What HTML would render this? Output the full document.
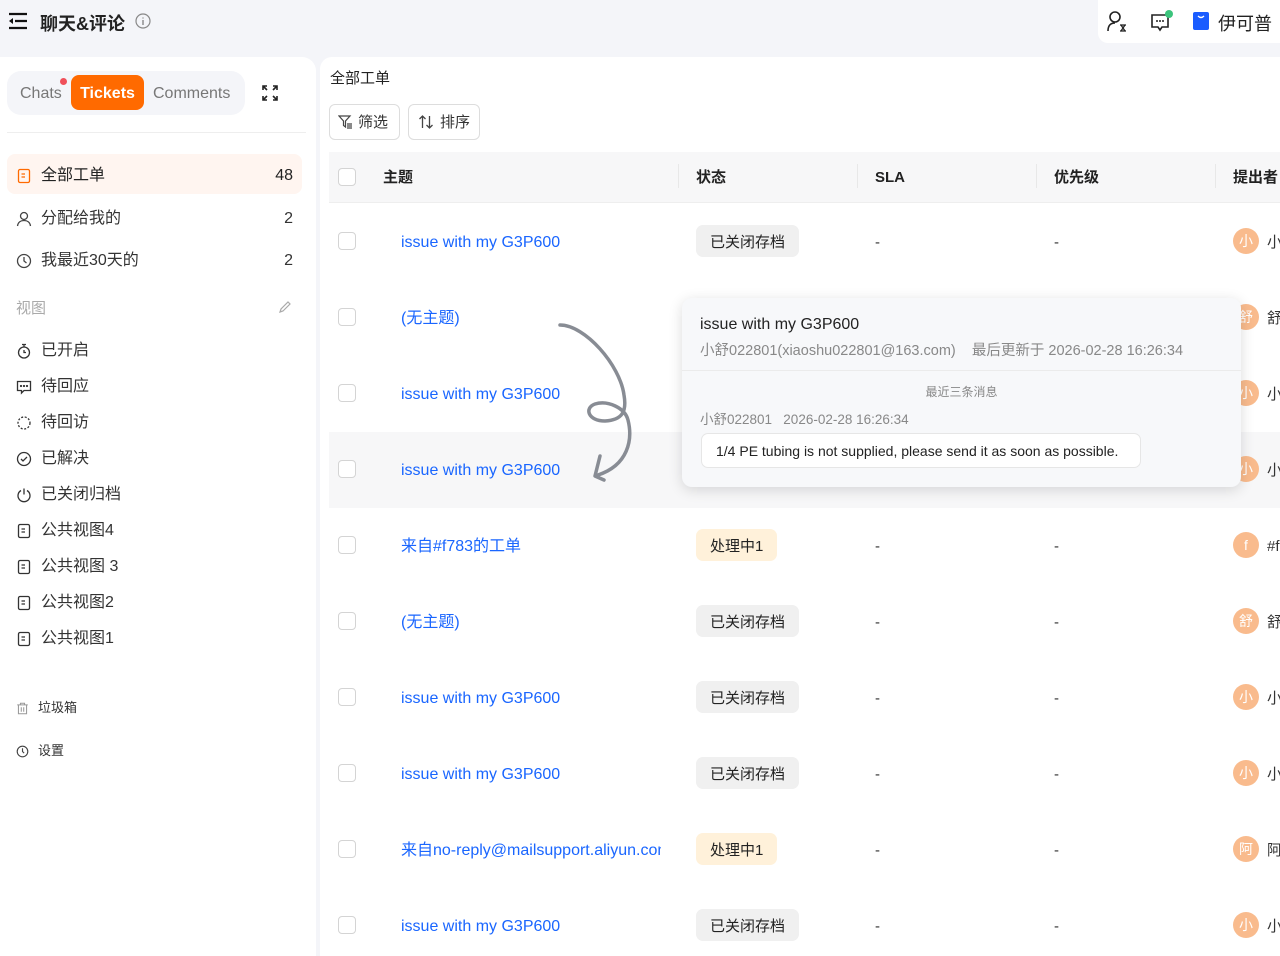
<!DOCTYPE html>
<html><head><meta charset="utf-8"><style>
*{box-sizing:border-box;margin:0;padding:0}
body{width:1280px;height:956px;overflow:hidden;background:#f4f5f9;font-family:"Liberation Sans","Noto Sans CJK SC",sans-serif;color:#1f1f1f;position:relative}
.abs{position:absolute}
.side{position:absolute;left:0;top:57px;width:316px;height:899px;background:#fff;border-radius:0 14px 0 0}
.main{position:absolute;left:320px;top:57px;width:960px;height:899px;background:#fff;border-radius:12px 0 0 0}
.nav{position:absolute;left:16px;font-size:16px;line-height:20px;color:#333;display:flex;align-items:center;gap:9px;margin-top:2px}
.nav svg{width:16px;height:16px}
.cnt{position:absolute;left:243px;width:50px;text-align:right;font-size:16px;line-height:20px;color:#333;margin-top:2px}
.cb{position:absolute;left:338px;width:18px;height:18px;border:1px solid #d4d4d4;border-radius:4px;background:#fff}
.subj{position:absolute;left:401px;font-size:16px;line-height:20px;color:#1a66ff;margin-top:2px}
.tag{position:absolute;left:696px;height:32px;line-height:35px;padding:0 14px;border-radius:7px;font-size:15px;color:#222;background:#f0f0f0}
.tag.o{background:#fff1da}
.dash{position:absolute;font-size:15px;line-height:20px;color:#333;margin-top:2px}
.av{position:absolute;left:1233px;width:26px;height:26px;border-radius:50%;background:#f9bb8d;color:#fff;font-size:14px;text-align:center;line-height:27px}
.nm{position:absolute;left:1267px;font-size:15px;line-height:20px;color:#333;margin-top:2px}
.th{position:absolute;top:168px;font-size:15px;line-height:20px;font-weight:bold;color:#222}
.sep{position:absolute;top:164px;width:1px;height:24px;background:#e8e8e8}
</style></head><body>
<svg class="abs" style="left:8px;top:12px" width="20" height="18" viewBox="0 0 20 18"><path d="M1 2H19M7 9H19M1 16H19" stroke="#111" stroke-width="2.2"/><path d="M1 9L5 6V12Z" fill="#111"/></svg>
<div class="abs" style="left:40px;top:10px;font-size:18px;font-weight:bold;color:#222">聊天&amp;评论</div>
<svg class="abs" style="left:135px;top:13px" width="16" height="16" viewBox="0 0 16 16"><circle cx="8" cy="8" r="7" fill="none" stroke="#888" stroke-width="1.2"/><path d="M8 7V12M8 4.5V5.5" stroke="#888" stroke-width="1.4"/></svg>
<div class="abs" style="left:1098px;top:0;width:190px;height:43px;background:#fff;border-radius:0 0 0 10px"></div>
<svg class="abs" style="left:1106px;top:10px" width="22" height="22" viewBox="0 0 22 22"><circle cx="9" cy="7" r="5" fill="none" stroke="#222" stroke-width="1.6"/><path d="M2 21C2 15 5 13 9 13" fill="none" stroke="#222" stroke-width="1.6"/><path d="M14 15H20M14 21H20M15 15L19 21M19 15L15 21" stroke="#222" stroke-width="1.3"/></svg>
<svg class="abs" style="left:1150px;top:10px" width="26" height="24" viewBox="0 0 26 24"><path d="M2 5H18V17H12L10 20L8 17H2Z" fill="none" stroke="#222" stroke-width="1.6"/><circle cx="7" cy="11" r="1" fill="#222"/><circle cx="10" cy="11" r="1" fill="#222"/><circle cx="13" cy="11" r="1" fill="#222"/><circle cx="19" cy="4" r="4" fill="#3cc47c"/></svg>
<svg class="abs" style="left:1192px;top:11px" width="18" height="20" viewBox="0 0 18 20"><rect x="1" y="1" width="16" height="18" rx="2" fill="#1a5cff"/><path d="M6 5Q9 8 12 5" stroke="#fff" stroke-width="1.3" fill="none"/></svg>
<div class="abs" style="left:1218px;top:10px;font-size:18px;color:#222">伊可普</div>

<div class="side"></div>
<div class="main"></div>
<div class="abs" style="left:7px;top:71px;width:238px;height:44px;background:#f4f5f9;border-radius:14px"></div>
<div class="abs" style="left:20px;top:84px;font-size:16px;line-height:20px;color:#777">Chats</div>
<div class="abs" style="left:60px;top:78px;width:7px;height:7px;border-radius:50%;background:#f0505a"></div>
<div class="abs" style="left:71px;top:75px;width:73px;height:35px;background:#ff6a00;border-radius:8px;color:#fff;font-size:16px;font-weight:bold;text-align:center;line-height:37px">Tickets</div>
<div class="abs" style="left:153px;top:84px;font-size:16px;line-height:20px;color:#777">Comments</div>
<svg class="abs" style="left:262px;top:85px" width="16" height="16" viewBox="0 0 16 16" fill="none" stroke="#222" stroke-width="1.6"><path d="M1 5V1H5M1 1L5 5M11 1H15V5M15 1L11 5M1 11V15H5M1 15L5 11M15 11V15H11M15 15L11 11"/></svg>
<div class="abs" style="left:7px;top:132px;width:299px;height:1px;background:#eee"></div>
<div class="abs" style="left:7px;top:154px;width:295px;height:40px;background:#fff5f0;border-radius:8px"></div>
<div class="nav" style="top:164px;color:#222"><svg viewBox="0 0 16 16" fill="none" stroke="#ff6a00" stroke-width="1.3"><rect x="2.5" y="1.5" width="11" height="13" rx="1.5"/><path d="M5.5 6H9M5.5 9H9"/></svg>全部工单</div><div class="cnt" style="top:164px;color:#222">48</div>
<div class="nav" style="top:207px"><svg viewBox="0 0 16 16" fill="none" stroke="#444" stroke-width="1.3"><circle cx="8" cy="5" r="3.5"/><path d="M1.5 15C2 11 5 9.5 8 9.5S14 11 14.5 15"/></svg>分配给我的</div><div class="cnt" style="top:207px">2</div>
<div class="nav" style="top:249px"><svg viewBox="0 0 16 16" fill="none" stroke="#444" stroke-width="1.3"><circle cx="8" cy="8" r="6.5"/><path d="M8 4V8L10.5 10"/></svg>我最近30天的</div><div class="cnt" style="top:249px">2</div>
<div class="abs" style="left:16px;top:299px;font-size:15px;line-height:20px;color:#aaa">视图</div>
<svg class="abs" style="left:278px;top:300px" width="14" height="14" viewBox="0 0 14 14" fill="none" stroke="#aaa" stroke-width="1.2"><path d="M2 12L3 9L10 2L12 4L5 11Z"/></svg>
<div class="nav" style="top:339px"><svg viewBox="0 0 16 16" fill="none" stroke="#333" stroke-width="1.3"><circle cx="8" cy="9.5" r="5.5"/><path d="M6 1.5H10M8 1.5V4M8 7V9.5H10"/></svg>已开启</div>
<div class="nav" style="top:375px"><svg viewBox="0 0 16 16" fill="none" stroke="#333" stroke-width="1.3"><path d="M1.5 2.5H14.5V11.5H8L5.5 14V11.5H1.5Z"/><circle cx="5" cy="7" r=".5"/><circle cx="8" cy="7" r=".5"/><circle cx="11" cy="7" r=".5"/></svg>待回应</div>
<div class="nav" style="top:411px"><svg viewBox="0 0 16 16" fill="none" stroke="#333" stroke-width="1.3" stroke-dasharray="2 1.6"><circle cx="8" cy="8" r="6"/></svg>待回访</div>
<div class="nav" style="top:447px"><svg viewBox="0 0 16 16" fill="none" stroke="#333" stroke-width="1.3"><circle cx="8" cy="8" r="6.5"/><path d="M5 8L7 10L11 6"/></svg>已解决</div>
<div class="nav" style="top:483px"><svg viewBox="0 0 16 16" fill="none" stroke="#333" stroke-width="1.3"><path d="M5 3.5A6 6 0 1 0 11 3.5M8 1.5V7.5"/></svg>已关闭归档</div>
<div class="nav" style="top:519px"><svg viewBox="0 0 16 16" fill="none" stroke="#333" stroke-width="1.3"><rect x="2.5" y="1.5" width="11" height="13" rx="1.5"/><path d="M5.5 6H9M5.5 9H9"/></svg>公共视图4</div>
<div class="nav" style="top:555px"><svg viewBox="0 0 16 16" fill="none" stroke="#333" stroke-width="1.3"><rect x="2.5" y="1.5" width="11" height="13" rx="1.5"/><path d="M5.5 6H9M5.5 9H9"/></svg>公共视图 3</div>
<div class="nav" style="top:591px"><svg viewBox="0 0 16 16" fill="none" stroke="#333" stroke-width="1.3"><rect x="2.5" y="1.5" width="11" height="13" rx="1.5"/><path d="M5.5 6H9M5.5 9H9"/></svg>公共视图2</div>
<div class="nav" style="top:627px"><svg viewBox="0 0 16 16" fill="none" stroke="#333" stroke-width="1.3"><rect x="2.5" y="1.5" width="11" height="13" rx="1.5"/><path d="M5.5 6H9M5.5 9H9"/></svg>公共视图1</div>
<div class="nav" style="top:696px;font-size:13px;gap:9px"><svg style="width:13px;height:13px" viewBox="0 0 16 16" fill="none" stroke="#999" stroke-width="1.3"><path d="M1.5 3.5H14.5M5.5 3.5V1.5H10.5V3.5M3 3.5V14.5H13V3.5M6.5 6.5V12M9.5 6.5V12"/></svg>垃圾箱</div>
<div class="nav" style="top:739px;font-size:13px;gap:9px"><svg style="width:13px;height:13px" viewBox="0 0 16 16" fill="none" stroke="#444" stroke-width="1.4"><circle cx="8" cy="8" r="6.5"/><path d="M8 4V8L10 10"/></svg>设置</div>

<div class="abs" style="left:330px;top:69px;font-size:15px;line-height:20px;color:#222">全部工单</div>
<div class="abs" style="left:329px;top:104px;width:71px;height:36px;border:1px solid #ddd;border-radius:6px;font-size:15px;color:#333;line-height:36px;padding-left:28px">筛选</div>
<svg class="abs" style="left:338px;top:115px" width="15" height="14" viewBox="0 0 15 14" fill="none" stroke="#444" stroke-width="1.2"><path d="M1 1H12L7.5 6V12L5.5 10.5V6Z"/><path d="M9 9H14M9 11H14M9 13H14"/></svg>
<div class="abs" style="left:408px;top:104px;width:72px;height:36px;border:1px solid #ddd;border-radius:6px;font-size:15px;color:#333;line-height:36px;padding-left:31px">排序</div>
<svg class="abs" style="left:418px;top:114px" width="16" height="16" viewBox="0 0 16 16" fill="none" stroke="#444" stroke-width="1.3"><path d="M4.5 14V2M1.5 5L4.5 2L7.5 5M11.5 2V14M8.5 11L11.5 14L14.5 11"/></svg>
<div class="abs" style="left:329px;top:152px;width:951px;height:51px;background:#f7f7f8;border-bottom:1px solid #eee"></div>
<div class="cb" style="top:168px"></div>
<div class="th" style="left:383px">主题</div>
<div class="sep" style="left:678px"></div><div class="th" style="left:696px">状态</div>
<div class="sep" style="left:857px"></div><div class="th" style="left:875px">SLA</div>
<div class="sep" style="left:1036px"></div><div class="th" style="left:1054px">优先级</div>
<div class="sep" style="left:1215px"></div><div class="th" style="left:1233px">提出者</div>
<div class="abs" style="left:329px;top:432px;width:951px;height:76px;background:#f7f7f8"></div>

<div class="cb" style="top:232px"></div><div class="subj" style="top:231px">issue with my G3P600</div><div class="tag" style="top:225px">已关闭存档</div><div class="dash" style="left:875px;top:231px">-</div><div class="dash" style="left:1054px;top:231px">-</div><div class="av" style="top:228px">小</div><div class="nm" style="top:231px">小</div>
<div class="cb" style="top:308px"></div><div class="subj" style="top:307px">(无主题)</div><div class="av" style="top:304px">舒</div><div class="nm" style="top:307px">舒</div>
<div class="cb" style="top:384px"></div><div class="subj" style="top:383px">issue with my G3P600</div><div class="av" style="top:380px">小</div><div class="nm" style="top:383px">小</div>
<div class="cb" style="top:460px"></div><div class="subj" style="top:459px">issue with my G3P600</div><div class="av" style="top:456px">小</div><div class="nm" style="top:459px">小</div>
<div class="cb" style="top:536px"></div><div class="subj" style="top:535px">来自#f783的工单</div><div class="tag o" style="top:529px">处理中1</div><div class="dash" style="left:875px;top:535px">-</div><div class="dash" style="left:1054px;top:535px">-</div><div class="av" style="top:532px">f</div><div class="nm" style="top:535px">#f</div>
<div class="cb" style="top:612px"></div><div class="subj" style="top:611px">(无主题)</div><div class="tag" style="top:605px">已关闭存档</div><div class="dash" style="left:875px;top:611px">-</div><div class="dash" style="left:1054px;top:611px">-</div><div class="av" style="top:608px">舒</div><div class="nm" style="top:611px">舒</div>
<div class="cb" style="top:688px"></div><div class="subj" style="top:687px">issue with my G3P600</div><div class="tag" style="top:681px">已关闭存档</div><div class="dash" style="left:875px;top:687px">-</div><div class="dash" style="left:1054px;top:687px">-</div><div class="av" style="top:684px">小</div><div class="nm" style="top:687px">小</div>
<div class="cb" style="top:764px"></div><div class="subj" style="top:763px">issue with my G3P600</div><div class="tag" style="top:757px">已关闭存档</div><div class="dash" style="left:875px;top:763px">-</div><div class="dash" style="left:1054px;top:763px">-</div><div class="av" style="top:760px">小</div><div class="nm" style="top:763px">小</div>
<div class="cb" style="top:840px"></div><div class="subj" style="top:839px;width:260px;overflow:hidden;white-space:nowrap">来自no-reply@mailsupport.aliyun.com</div><div class="tag o" style="top:833px">处理中1</div><div class="dash" style="left:875px;top:839px">-</div><div class="dash" style="left:1054px;top:839px">-</div><div class="av" style="top:836px">阿</div><div class="nm" style="top:839px">阿</div>
<div class="cb" style="top:916px"></div><div class="subj" style="top:915px">issue with my G3P600</div><div class="tag" style="top:909px">已关闭存档</div><div class="dash" style="left:875px;top:915px">-</div><div class="dash" style="left:1054px;top:915px">-</div><div class="av" style="top:912px">小</div><div class="nm" style="top:915px">小</div>

<svg class="abs" style="left:0;top:0" width="1280" height="956"><path d="M560 325C585 325 620 365 624 395C627 412 622 420 605 421C588 421 584 408 595 404C608 400 625 408 628 420C633 440 628 465 598 475M600 456L595 476L604 480" fill="none" stroke="#888c94" stroke-width="3.5" stroke-linecap="round" stroke-linejoin="round"/></svg>

<div class="abs" style="left:682px;top:298px;width:559px;height:189px;background:#f7f8fa;border-radius:10px;box-shadow:0 3px 14px rgba(0,0,0,.14)">
<div class="abs" style="left:18px;top:17px;font-size:16px;line-height:20px;color:#222">issue with my G3P600</div>
<div class="abs" style="left:18px;top:43px;font-size:14.5px;line-height:20px;color:#888;white-space:nowrap">小舒022801(xiaoshu022801@163.com)&nbsp;&nbsp;&nbsp; 最后更新于 2026-02-28 16:26:34</div>
<div class="abs" style="left:0;top:72px;width:559px;height:1px;background:#ebebeb"></div>
<div class="abs" style="left:0;top:85px;width:559px;text-align:center;font-size:12px;line-height:18px;color:#888">最近三条消息</div>
<div class="abs" style="left:18px;top:113px;font-size:13.5px;line-height:18px;color:#888;white-space:nowrap">小舒022801&nbsp;&nbsp; 2026-02-28 16:26:34</div>
<div class="abs" style="left:19px;top:135px;width:440px;height:35px;background:#fff;border:1px solid #e6e6e6;border-radius:7px;font-size:14px;color:#222;line-height:35px;padding-left:14px">1/4 PE tubing is not supplied, please send it as soon as possible.</div>
</div>
</body></html>
